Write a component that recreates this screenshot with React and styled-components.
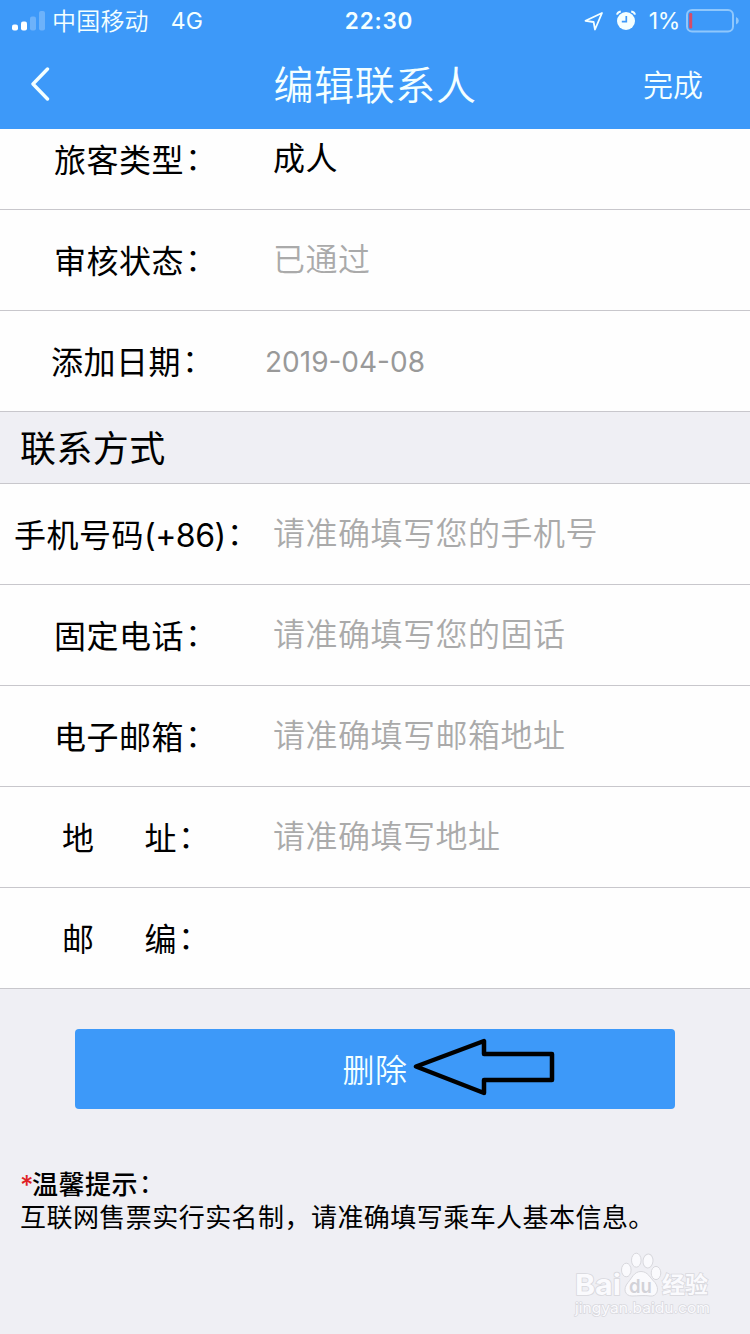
import React from 'react';
import styled, { createGlobalStyle } from 'styled-components';

const GlobalStyle = createGlobalStyle`
  * {
    box-sizing: border-box;
  }

  body {
    margin: 0;
    background: #efeff4;
    font-family: Inter, "Noto Sans CJK SC", sans-serif;
    color: #000;
  }
`

const Screen = styled.div`
  width: 750px;
  height: 1334px;
  display: flex;
  flex-direction: column;
  overflow: hidden;
  background: #efeff4;
`

const Header = styled.header`
  flex: none;
  height: 129px;
  background: #3d99f9;
  color: #f4ffff;
`

const StatusBar = styled.div`
  height: 41px;
  display: grid;
  grid-template-columns: 1fr auto 1fr;
  align-items: center;
  padding: 0 11px 0 12px;
  font-size: 24px;
  line-height: 42px;
`

const StatusGroup = styled.div`
  display: flex;
  align-items: center;
  justify-content: ${p => (p.$end ? 'flex-end' : 'flex-start')};
  height: 41px;

  svg {
    flex: none;
  }
`

const Carrier = styled.span`
  margin: 1px 0 0 6px;
  font-weight: 350;
  letter-spacing: 0.2px;
`

const Network = styled.span`
  margin: 0 0 0 22px;
  font-size: 23px;
`

const Clock = styled.span`
  margin-left: 7px;
  font-size: 22.5px;
  font-weight: 600;
  letter-spacing: 0.8px;
`

const Percent = styled.span`
  margin: 0 6px 0 13px;
  font-size: 23px;
  letter-spacing: -0.3px;
`

const NavBar = styled.nav`
  height: 87px;
  display: grid;
  grid-template-columns: 1fr auto 1fr;
  align-items: center;
  padding: 0 47px 0 30px;
`

const BackButton = styled.button`
  display: flex;
  width: 22px;
  padding: 0 0 1px;
  border: 0;
  background: none;
  color: inherit;
`

const Title = styled.h1`
  margin: 3px 0 0 17px;
  font-size: 40px;
  font-weight: 350;
  line-height: 60px;
  letter-spacing: 0.6px;
`

const DoneButton = styled.button`
  justify-self: end;
  padding: 1px 0 0;
  border: 0;
  background: none;
  color: inherit;
  font: 350 30px/44px Inter, "Noto Sans CJK SC", sans-serif;
`

const Group = styled.section`
  flex: none;
  background: #fefefe;
`

const Row = styled.div`
  display: flex;
  align-items: ${p => (p.$clipped ? 'flex-end' : 'center')};
  height: ${p => (p.$clipped ? 81 : 101)}px;
  padding: ${p => (p.$clipped ? '0 0 24px' : '4px 0 0')};
  border-bottom: 1px solid #c8c7cc;
  font-size: 32px;
  line-height: 48px;
  letter-spacing: 0.5px;
  white-space: pre;
`

const Label = styled.span`
  flex: none;
  display: flex;
  width: ${p => p.$width || 273}px;
  padding-left: ${p => p.$indent}px;
`

const Code = styled.span`
  letter-spacing: -0.5px;
`

const Colon = styled.span`
  margin-left: 1px;
  font-weight: 350;
  line-height: 44px;
`

const Spacer = styled.span`
  width: 50px;
`

const Value = styled.span`
  font-size: ${p => (p.$date ? 28 : 32)}px;
  font-weight: ${p => (p.$muted && !p.$date ? 350 : 400)};
  letter-spacing: ${p => (p.$date ? 0 : 0.5)}px;
  color: ${p => (p.$date ? '#999' : p.$muted ? '#aaa' : '#000')};
  padding-bottom: ${p => (p.$date ? 2 : p.$muted ? 4 : 2)}px;
`

const SectionTitle = styled.h2`
  flex: none;
  height: 72px;
  margin: 0;
  padding: 1px 0 0 20px;
  border-bottom: 1px solid #c8c7cc;
  font-size: 36px;
  font-weight: 400;
  line-height: 72px;
  letter-spacing: 0.4px;
`

const DeleteButton = styled.button`
  flex: none;
  position: relative;
  width: 600px;
  height: 80px;
  margin: 40px auto 0;
  padding: 4px 0 0;
  border: 0;
  border-radius: 4px;
  background: #3d99f9;
  color: #f4ffff;
  font: 350 32px/76px Inter, "Noto Sans CJK SC", sans-serif;
  letter-spacing: 0.5px;
`

const Arrow = styled.svg`
  position: absolute;
  left: 335px;
  top: 5px;
`

const Tips = styled.div`
  margin-top: 60px;
  padding-left: 20px;
  font-size: 26px;
  line-height: 32px;
  letter-spacing: 0.45px;
  white-space: nowrap;
`

const TipsTitle = styled.div`
  display: flex;
  height: 33px;
  font-weight: 500;

  ${Colon} {
    line-height: 30px;
    font-weight: 400;
  }
`

const Star = styled.span`
  color: #e01f26;
  letter-spacing: -1.5px;
`

const Watermark = styled.svg`
  position: absolute;
  left: 570px;
  top: 1245px;
`

const Signal = () => (
  <svg width="34" height="22" viewBox="0 0 34 22" fill="#fff">
    <rect x="0" y="14.5" width="6" height="6" rx="2" />
    <rect x="9" y="11.5" width="6" height="9" rx="2" />
    <rect x="18" y="6.5" width="6" height="14" rx="2" opacity=".25" />
    <rect x="27" y="1" width="6" height="19.5" rx="2" opacity=".25" />
  </svg>
)

const LocationIcon = () => (
  <svg width="20" height="22" viewBox="0 0 20 22" fill="none" stroke="#f4ffff" strokeWidth="1.8" strokeLinejoin="round">
    <path d="M18 3 L1.5 10.8 L9.6 12 L11 19.5 Z" />
  </svg>
)

const AlarmIcon = () => (
  <svg width="20" height="22" viewBox="0 0 20 22">
    <circle cx="10" cy="11" r="9" fill="#f4ffff" />
    <path d="M1 4.6 Q1.6 2 4.8 1.4 M15.2 1.4 Q18.4 2 19 4.6" fill="none" stroke="#f4ffff" strokeWidth="2" />
    <path d="M10.3 6 V11.7 H5.8" fill="none" stroke="#3d99f9" strokeWidth="1.7" />
  </svg>
)

const IconGap = styled.span`
  width: 12px;
`

const Battery = () => (
  <svg width="53" height="24" viewBox="0 0 53 24">
    <rect x="1" y="1" width="46" height="21.5" rx="5" fill="none" stroke="#8fc7fc" strokeWidth="2" />
    <rect x="3.2" y="4" width="3" height="15.5" rx="1.2" fill="#d64c68" />
    <path d="M50 8 Q52.8 9 52.8 11.8 Q52.8 14.6 50 15.6 Z" fill="#8fc7fc" />
  </svg>
)

const BaiduMark = () => (
  <Watermark width="150" height="75" viewBox="0 0 150 75" fill="#fafafd" stroke="#d8d8dd" strokeWidth="1">
    <g fontFamily="Inter, sans-serif">
      <text x="5" y="50" fontSize="29" fontWeight="700" textLength="46" lengthAdjust="spacingAndGlyphs" strokeWidth="1.6" paintOrder="stroke">Bai</text>
      <ellipse cx="56.3" cy="25" rx="4.8" ry="6.8" />
      <ellipse cx="66.3" cy="15.2" rx="4.8" ry="7" />
      <ellipse cx="78" cy="16" rx="5" ry="7" transform="rotate(6 78 16)" />
      <ellipse cx="86" cy="28" rx="4.8" ry="6.6" />
      <path d="M71 26.5 C64 26.5 62 33 58 37.5 C52.5 44 55 51 62 51 C67 51 75 50 80 51 C87 52 90 44 85 37.5 C80 33 78 26.5 71 26.5 Z" />
      <text x="59" y="48" fontSize="19" fontWeight="600" textLength="23" lengthAdjust="spacingAndGlyphs" fill="#d2d2d8" stroke="none">du</text>
      <text x="5" y="68" fontSize="14.5" textLength="135" lengthAdjust="spacingAndGlyphs" strokeWidth="1.4" paintOrder="stroke">jingyan.baidu.com</text>
    </g>
    <text x="92" y="48" fontSize="23" fontWeight="700" fontFamily="Noto Sans CJK SC, sans-serif" textLength="46" strokeWidth="1.6" paintOrder="stroke">经验</text>
  </Watermark>
)

const contactRows = [
  { label: '手机号码', code: '(+86)', indent: 14, value: '请准确填写您的手机号' },
  { label: '固定电话', indent: 54, value: '请准确填写您的固话' },
  { label: '电子邮箱', indent: 54, value: '请准确填写邮箱地址' },
  { label: '地', tail: '址', indent: 62, value: '请准确填写地址' },
  { label: '邮', tail: '编', indent: 62, value: '' },
]

const App = () => {
  return (
    <Screen>
      <GlobalStyle />
      <Header>
        <StatusBar>
          <StatusGroup>
            <Signal />
            <Carrier>中国移动</Carrier>
            <Network>4G</Network>
          </StatusGroup>
          <Clock>22:30</Clock>
          <StatusGroup $end>
            <LocationIcon />
            <IconGap />
            <AlarmIcon />
            <Percent>1%</Percent>
            <Battery />
          </StatusGroup>
        </StatusBar>
        <NavBar>
          <BackButton aria-label="返回">
            <svg width="20" height="34" viewBox="0 0 20 34" fill="none" stroke="currentColor" strokeWidth="3.4" strokeLinecap="round" strokeLinejoin="round">
              <path d="M17.5 2 L3 17 L17.5 32" />
            </svg>
          </BackButton>
          <Title>编辑联系人</Title>
          <DoneButton>完成</DoneButton>
        </NavBar>
      </Header>

      <Group>
        <Row $clipped>
          <Label $indent={54}>旅客类型<Colon>：</Colon></Label>
          <Value>成人</Value>
        </Row>
        <Row>
          <Label $indent={54}>审核状态<Colon>：</Colon></Label>
          <Value $muted>已通过</Value>
        </Row>
        <Row>
          <Label $indent={51} $width={265}>添加日期<Colon>：</Colon></Label>
          <Value $muted $date>2019-04-08</Value>
        </Row>
      </Group>

      <SectionTitle>联系方式</SectionTitle>

      <Group>
        {contactRows.map(row => (
          <Row key={row.label}>
            <Label $indent={row.indent}>
              {row.label}
              {row.code && <Code>{row.code}</Code>}
              {row.tail && <Spacer />}
              {row.tail}
              <Colon>：</Colon>
            </Label>
            <Value $muted>{row.value}</Value>
          </Row>
        ))}
      </Group>

      <DeleteButton>
        删除
        <Arrow width="150" height="66" viewBox="0 0 150 66" fill="none" stroke="#000" strokeWidth="4.5" strokeLinejoin="round">
          <path d="M6 32.5 L74 7 V20 H142 V46 H74 V59 Z" />
        </Arrow>
      </DeleteButton>

      <Tips>
        <TipsTitle><Star>*</Star>温馨提示<Colon>：</Colon></TipsTitle>
        互联网售票实行实名制，请准确填写乘车人基本信息。
      </Tips>
      <BaiduMark />
    </Screen>
  )
}

export default App;
